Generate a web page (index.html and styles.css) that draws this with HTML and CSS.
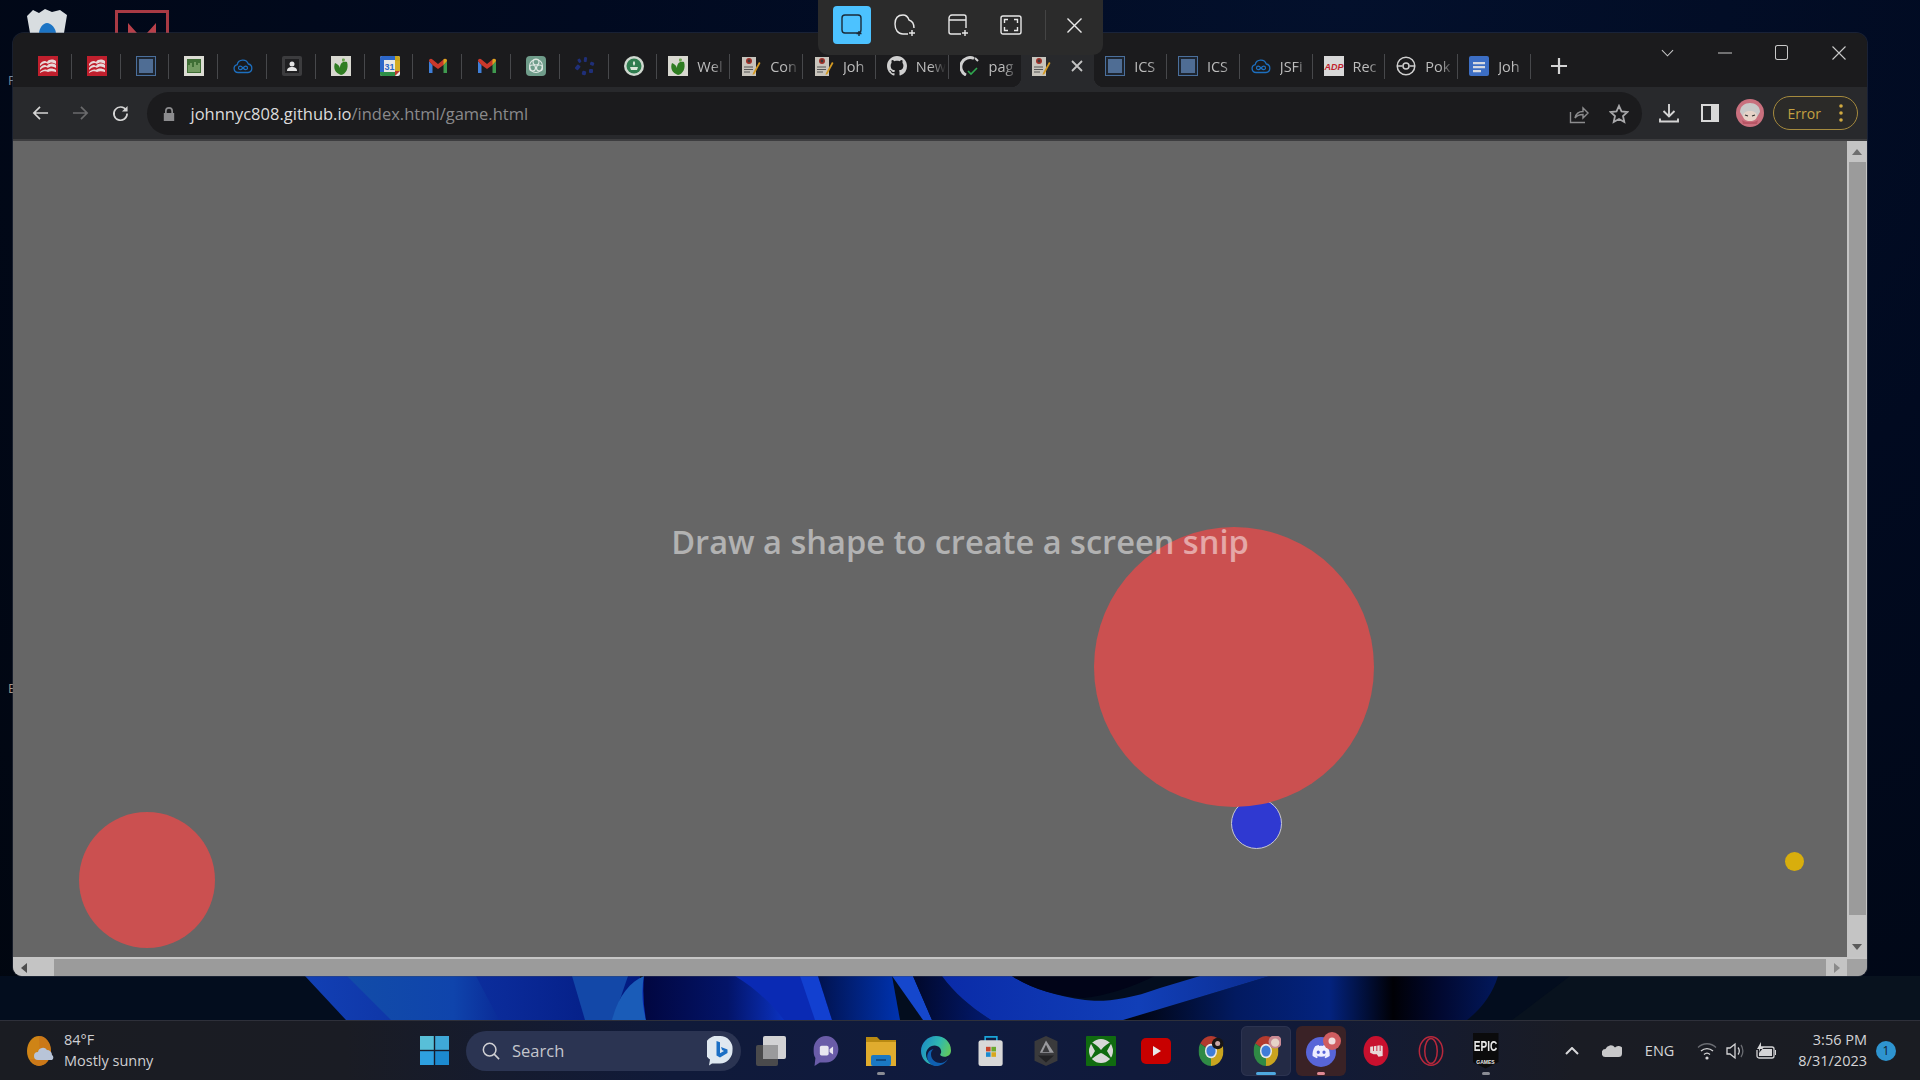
FILE: index.html
```html
<!DOCTYPE html>
<html lang="en">
<head>
<meta charset="utf-8">
<title>Snip</title>
<link rel="stylesheet" href="styles.css">
</head>
<body>
<svg class="defs" width="0" height="0" aria-hidden="true">
  <defs>
    <symbol id="f-hmh" viewBox="0 0 20 20"><rect width="20" height="20" fill="#c01f2d"/><path d="M2 8c2-3 5-4 7-2 2-3 6-3 9-1v3c-3-2-6-2-8 0-2-2-5-1-8 2zM2 12c2-3 5-4 7-2 2-3 6-3 9-1v3c-3-2-6-2-8 0-2-2-5-1-8 2zM2 16c2-2 5-3 7-2 2-2 6-2 9 0v2c-3-1-6-1-8 0-2-1-5-1-8 1z" fill="#e8d8d8"/></symbol>
    <symbol id="f-ics" viewBox="0 0 20 20"><rect x=".5" y=".5" width="19" height="19" fill="#1d2530" stroke="#4a6f9c"/><rect x="3" y="3" width="14" height="14" fill="#4f6d94"/></symbol>
    <symbol id="f-chart" viewBox="0 0 20 20"><rect width="20" height="20" fill="#dcdcd4"/><rect x="3" y="3" width="14" height="14" fill="#3f6e35"/><path d="M5 16V9M7 16V7M9 16v-5M11 16V6M13 16V9M15 16V7" stroke="#a8c890" stroke-width="1"/></symbol>
    <symbol id="f-cloud" viewBox="0 0 20 20"><path d="M5 16.5a4 4 0 0 1-.8-7.9A5.8 5.8 0 0 1 15.3 8a4.3 4.3 0 0 1-.3 8.5z" fill="none" stroke="#1d6fbf" stroke-width="1.3"/><path d="M10 12c-1-1.4-1.8-1.9-2.7-1.9a1.8 1.8 0 0 0 0 3.6c.9 0 1.7-.5 2.7-1.7s1.8-1.9 2.7-1.9a1.8 1.8 0 0 1 0 3.6c-.9 0-1.7-.5-2.7-1.7z" fill="none" stroke="#1d6fbf" stroke-width="1.2"/></symbol>
    <symbol id="f-contact" viewBox="0 0 20 20"><rect width="20" height="20" rx="2" fill="#3c3c3e"/><rect x="3" y="3" width="14" height="14" fill="#1f1f21"/><circle cx="10" cy="8" r="2.5" fill="#e4e4e4"/><path d="M5 15c0-3 2-4 5-4s5 1 5 4z" fill="#e4e4e4"/></symbol>
    <symbol id="f-leaf" viewBox="0 0 20 20"><rect width="20" height="20" fill="#d8d8d0"/><path d="M10 19C4 17 2 12 4 7c2 1 4 2 5 5 0-4 2-7 7-6 2 6-1 12-6 13z" fill="#2f7d22"/><path d="M11 3c2-1 3 0 3 1-1 2-2 2-3 1z" fill="#6aa84f"/></symbol>
    <symbol id="f-cal" viewBox="0 0 20 20"><rect width="20" height="20" rx="2" fill="#e8e8e8"/><path d="M0 4V2a2 2 0 0 1 2-2h13v4z" fill="#2d67c9"/><path d="M0 4h4v12H0z" fill="#2d67c9"/><path d="M0 16h15v4H2a2 2 0 0 1-2-2z" fill="#2e8f47"/><path d="M15 0h3a2 2 0 0 1 2 2v3h-5z" fill="#c9a51e"/><path d="M15 5h5v10h-5z" fill="#d4ac22"/><path d="M15 15h5l-5 5z" fill="#b8392d"/><text x="9.6" y="14" class="cal-num">31</text></symbol>
    <symbol id="f-gmail" viewBox="0 0 20 20"><path d="M1 5v12h3.5V9z" fill="#3f7fd8"/><path d="M19 5v12h-3.500V9z" fill="#3f9a4f"/><path d="M1 5c0-2 2-2.800 3.500-1.600L10 8l5.500-4.600C17 2.200 19 3 19 5l-3.500 4L10 13 4.500 9z" fill="#c9392c"/><path d="M15.500 3.400C17 2.200 19 3 19 5l-3.500 4z" fill="#d8a91f"/></symbol>
    <symbol id="f-gpt" viewBox="0 0 20 20"><rect width="20" height="20" rx="4" fill="#6f9c8a"/><g fill="none" stroke="#dfe8e3" stroke-width="1.1"><circle cx="10" cy="6" r="3"/><circle cx="6.500" cy="12" r="3"/><circle cx="13.500" cy="12" r="3"/><circle cx="10" cy="10" r="6.500"/></g></symbol>
    <symbol id="f-spin" viewBox="0 0 20 20"><g fill="#1f2f78"><rect x="9" y="1" width="3" height="5" rx="1" transform="rotate(8 10 3)"/><rect x="15" y="6" width="4" height="3.500" rx="1" transform="rotate(20 17 8)"/><rect x="14" y="13" width="4" height="4" rx="1"/><rect x="7" y="15" width="4" height="4" rx="1" transform="rotate(15 9 17)"/><rect x="1" y="9" width="4" height="5" rx="1" transform="rotate(40 3 11)"/><rect x="3" y="3" width="3" height="4" rx="1" transform="rotate(-30 4 5)"/></g></symbol>
    <symbol id="f-seal" viewBox="0 0 20 20"><circle cx="10" cy="10" r="10" fill="#cfd8cf"/><circle cx="10" cy="10" r="7.500" fill="#2f7d4f"/><path d="M6 11h8l-1 3H7zM10 5c1.500 1 1.500 3 0 5-1.500-2-1.500-4 0-5z" fill="#d9e6d9"/></symbol>
    <symbol id="f-doc" viewBox="0 0 20 20"><rect x="1" y="1" width="14" height="19" fill="#c8c4bc"/><circle cx="8" cy="5" r="3" fill="#a03028"/><circle cx="8" cy="5" r="1.400" fill="#3a3a3a"/><path d="M3 11h9M3 13.500h9M3 16h6" stroke="#555" stroke-width="1"/><path d="M12 17l6-11 1.500 1-6 11-2 1z" fill="#d49a22"/></symbol>
    <symbol id="f-gh" viewBox="0 0 16 16"><path fill="#cfcfcf" d="M8 0C3.580 0 0 3.580 0 8c0 3.540 2.290 6.530 5.470 7.590.4.070.55-.17.55-.38 0-.19-.01-.82-.01-1.490-2.010.37-2.530-.49-2.690-.94-.09-.23-.48-.94-.82-1.130-.28-.15-.68-.52-.01-.53.63-.01 1.080.58 1.230.82.72 1.210 1.870.87 2.330.66.07-.52.28-.87.51-1.070-1.780-.2-3.640-.89-3.640-3.950 0-.87.31-1.590.82-2.150-.08-.2-.36-1.020.08-2.120 0 0 .67-.21 2.200.82.64-.18 1.320-.27 2-.27.68 0 1.360.09 2 .27 1.530-1.040 2.200-.82 2.200-.82.44 1.100.16 1.920.08 2.120.51.56.82 1.270.82 2.150 0 3.070-1.870 3.750-3.650 3.950.29.25.54.73.54 1.480 0 1.070-.01 1.930-.01 2.200 0 .21.15.46.55.38A8.013 8.013 0 0 0 16 8c0-4.420-3.580-8-8-8z"/></symbol>
    <symbol id="f-pag" viewBox="0 0 20 20"><path d="M14 2.500A9 9 0 0 0 6 19" fill="none" stroke="#cfcfcf" stroke-width="3"/><path d="M15 2l3 3" stroke="#cfcfcf" stroke-width="2"/><path d="M8 15l3 3 6-6" fill="none" stroke="#2fa84f" stroke-width="1.600"/></symbol>
    <symbol id="f-adp" viewBox="0 0 20 20"><rect width="20" height="20" fill="#d8d8d8"/><text x="10" y="13.500" class="adp-word">ADP</text></symbol>
    <symbol id="f-poke" viewBox="0 0 20 20"><circle cx="10" cy="10" r="8.800" fill="none" stroke="#cfcfcf" stroke-width="1.500"/><path d="M1.500 10h5M13.500 10h5" stroke="#cfcfcf" stroke-width="1.500"/><circle cx="10" cy="10" r="3" fill="none" stroke="#cfcfcf" stroke-width="1.500"/></symbol>
    <symbol id="f-gdoc" viewBox="0 0 20 20"><rect width="20" height="20" rx="2" fill="#3c6ec4"/><path d="M4 6h12v2.200H4zM4 10h12v2.200H4zM4 14h8v2.200H4z" fill="#d5d9e0"/></symbol>
    <symbol id="t-chrome" viewBox="0 0 24 24"><path d="M12 12L1.610 6A12 12 0 0 1 22.390 6Z" fill="#b33a2e"/><path d="M12 12L22.390 6A12 12 0 0 1 12 24Z" fill="#c9a41f"/><path d="M12 12L12 24A12 12 0 0 1 1.610 6Z" fill="#2f8a45"/><circle cx="12" cy="12" r="5.800" fill="#e8e8e8"/><circle cx="12" cy="12" r="4.400" fill="#3f7cd8"/></symbol>
  </defs>
</svg>

<main class="desktop">
  <svg class="wallpaper" viewBox="0 0 1920 44" preserveAspectRatio="none" aria-hidden="true">
    <defs>
      <linearGradient id="w1" x1="0" x2="1"><stop offset="0" stop-color="#1240b4"/><stop offset=".6" stop-color="#0a2a98"/><stop offset="1" stop-color="#021a80"/></linearGradient>
      <linearGradient id="w2" x1="0" x2="1"><stop offset="0" stop-color="#124ca8"/><stop offset=".7" stop-color="#0f44ac"/><stop offset="1" stop-color="#0a2c98"/></linearGradient>
      <linearGradient id="w3" x1="0" x2="1"><stop offset="0" stop-color="#010640"/><stop offset=".6" stop-color="#031468"/><stop offset="1" stop-color="#0b32c0"/></linearGradient>
      <linearGradient id="w4" x1="0" x2="1"><stop offset="0" stop-color="#01124e"/><stop offset="1" stop-color="#0033b0"/></linearGradient>
      <linearGradient id="w5" x1="0" x2="1"><stop offset="0" stop-color="#01082a"/><stop offset="1" stop-color="#021a70"/></linearGradient>
      <linearGradient id="w6" x1="0" x2="1"><stop offset="0" stop-color="#0a2ba8"/><stop offset=".6" stop-color="#113fb8"/><stop offset="1" stop-color="#0b2d90"/></linearGradient>
      <linearGradient id="w7" x1="0" x2="1"><stop offset="0" stop-color="#010208"/><stop offset=".3" stop-color="#021a60"/><stop offset=".55" stop-color="#03237f"/><stop offset=".72" stop-color="#000005"/><stop offset=".84" stop-color="#01082e"/><stop offset="1" stop-color="#02185c"/></linearGradient>
    </defs>
    <rect width="1920" height="44" fill="#030d1e"/>
    <path d="M1512 44L1570 0H1920V44Z" fill="#08121e"/>
    <path d="M1123 44L1270 0H1498Q1490 26 1467 44Z" fill="url(#w7)"/>
    <path d="M305 0H640V44H346Z" fill="url(#w1)"/>
    <path d="M347 0H476L499 44H391Z" fill="url(#w2)"/>
    <path d="M572 0H628L613 44H585Z" fill="#1348a8"/>
    <path d="M612 44C618 20 630 6 644 0H660V44Z" fill="#1a5cb8"/>
    <path d="M630 0H835V44H646Q640 20 644 0Z" fill="#0a2ab4"/>
    <path d="M644 0H735C755 12 772 28 784 44H646Q642 22 644 0Z" fill="url(#w3)"/>
    <path d="M800 0H818L832 44H815Z" fill="#1240d0"/>
    <path d="M818 0H892L900 44H832Z" fill="url(#w4)"/>
    <path d="M892 0H913L932 44H923Z" fill="#1547cc"/>
    <path d="M913 0H942C955 18 972 32 991 44H932Z" fill="url(#w5)"/>
    <path d="M942 0H1012C1030 12 1055 20 1085 24C1100 26 1125 25 1160 12L1200 0H1270L1123 44H991C972 32 955 18 942 0Z" fill="url(#w6)"/>
    <path d="M1012 0H1155C1130 12 1105 20 1083 22C1055 20 1030 12 1012 0Z" fill="#010418"/>
  </svg>

  <div class="bin-icon" aria-hidden="true">
    <svg viewBox="0 0 44 26" width="44" height="26"><path d="M2 8l6-6 6 3 6-4 7 3 8-2 7 5-3 18H5z" fill="#d8dde0"/><path d="M14 26c0-6 4-11 8-11s9 5 9 11z" fill="#1c74c4"/></svg>
  </div>
  <div class="game-icon" aria-hidden="true">
    <svg viewBox="0 0 54 23" width="54" height="23"><path d="M13 23V13l9 10zM41 23V13l-9 10z" fill="#b8404a"/></svg>
  </div>
  <span class="edge-label edge-label-top">F</span>
  <span class="edge-label edge-label-mid">E</span>

  <section class="window">
    <div class="tabstrip">
      <div class="tab"><svg class="fav"><use href="#f-hmh"/></svg></div>
      <div class="tab"><svg class="fav"><use href="#f-hmh"/></svg></div>
      <div class="tab"><svg class="fav"><use href="#f-ics"/></svg></div>
      <div class="tab"><svg class="fav"><use href="#f-chart"/></svg></div>
      <div class="tab"><svg class="fav"><use href="#f-cloud"/></svg></div>
      <div class="tab"><svg class="fav"><use href="#f-contact"/></svg></div>
      <div class="tab"><svg class="fav"><use href="#f-leaf"/></svg></div>
      <div class="tab"><svg class="fav"><use href="#f-cal"/></svg></div>
      <div class="tab"><svg class="fav"><use href="#f-gmail"/></svg></div>
      <div class="tab"><svg class="fav"><use href="#f-gmail"/></svg></div>
      <div class="tab"><svg class="fav"><use href="#f-gpt"/></svg></div>
      <div class="tab"><svg class="fav"><use href="#f-spin"/></svg></div>
      <div class="tab"><svg class="fav"><use href="#f-seal"/></svg></div>
      <div class="tab tab-text"><svg class="fav"><use href="#f-leaf"/></svg><span class="tab-title">Wel</span></div>
      <div class="tab tab-text"><svg class="fav"><use href="#f-doc"/></svg><span class="tab-title">Con</span></div>
      <div class="tab tab-text"><svg class="fav"><use href="#f-doc"/></svg><span class="tab-title">Joh</span></div>
      <div class="tab tab-text"><svg class="fav"><use href="#f-gh"/></svg><span class="tab-title">New</span></div>
      <div class="tab tab-text tab-nosep"><svg class="fav"><use href="#f-pag"/></svg><span class="tab-title">pag</span></div>
      <div class="tab-active">
        <svg class="fav"><use href="#f-doc"/></svg>
        <svg class="tab-close" viewBox="0 0 12 12"><path d="M1 1l10 10M11 1L1 11"/></svg>
      </div>
      <div class="tab tab-text"><svg class="fav"><use href="#f-ics"/></svg><span class="tab-title">ICS</span></div>
      <div class="tab tab-text"><svg class="fav"><use href="#f-ics"/></svg><span class="tab-title">ICS</span></div>
      <div class="tab tab-text"><svg class="fav"><use href="#f-cloud"/></svg><span class="tab-title">JSFi</span></div>
      <div class="tab tab-text"><svg class="fav"><use href="#f-adp"/></svg><span class="tab-title">Rec</span></div>
      <div class="tab tab-text"><svg class="fav"><use href="#f-poke"/></svg><span class="tab-title">Pok</span></div>
      <div class="tab tab-text"><svg class="fav"><use href="#f-gdoc"/></svg><span class="tab-title">Joh</span></div>
      <svg class="new-tab" viewBox="0 0 16 16"><path d="M8 0v16M0 8h16"/></svg>
      <div class="caption">
        <svg class="cap-chev" viewBox="0 0 14 8"><path d="M1 1l6 6 6-6"/></svg>
        <svg class="cap-min" viewBox="0 0 14 2"><path d="M0 1h14"/></svg>
        <svg class="cap-max" viewBox="0 0 14 16"><rect x=".5" y=".5" width="13" height="15" rx="2"/></svg>
        <svg class="cap-close" viewBox="0 0 14 14"><path d="M.5.5l13 13M13.500.5l-13 13"/></svg>
      </div>
    </div>

    <div class="toolbar">
      <svg class="nav-icon" viewBox="0 0 18 16"><path d="M17 8H2M8.500 1.500L2 8l6.500 6.500"/></svg>
      <svg class="nav-icon nav-off" viewBox="0 0 18 16"><path d="M1 8h15M9.500 1.500L16 8l-6.500 6.500"/></svg>
      <svg class="nav-icon nav-reload" viewBox="0 0 18 18"><path d="M15 5.500A7 7 0 1 0 16 9"/><path class="solid" d="M16.500 1v6h-6z"/></svg>
      <div class="omnibox">
        <svg class="lock" viewBox="0 0 12 14"><path d="M2 6V4a4 4 0 0 1 8 0v2h1.200v8H.8V6zm1.700 0h4.600V4a2.300 2.300 0 0 0-4.600 0z"/></svg>
        <span class="url"><span class="url-host">johnnyc808.github.io</span>/index.html/game.html</span>
        <svg class="omni-share" viewBox="0 0 20 20"><path d="M1.500 8v10.500h14.500M6 14c1-4.500 4-6.500 8-6.500V4l5 5-5 5v-3.500c-3 0-6 1-8 3.500z"/></svg>
        <svg class="omni-star" viewBox="0 0 20 20"><path d="M10 1.800l2.500 5.500 6 .7-4.500 4 1.300 6L10 15l-5.300 3 1.300-6-4.500-4 6-.7z"/></svg>
      </div>
      <svg class="tool-download" viewBox="0 0 20 20"><path d="M10 1v12M4.500 8l5.500 5.500L15.500 8"/><path d="M1 15.500v3h18v-3"/></svg>
      <svg class="tool-panel" viewBox="0 0 18 18"><rect width="18" height="18" fill="#d8d8d8"/><rect x="2" y="2" width="8" height="14" fill="#28292c"/></svg>
      <svg class="avatar" viewBox="0 0 28 28">
        <circle cx="14" cy="14" r="14" fill="#c9707e"/>
        <path d="M4 13c0-6 5-9 10-9s10 3 10 9l-3 5H7z" fill="#c9c9c9"/>
        <path d="M7 17c0-3 3-5 7-5s7 2 7 5-3 5-7 5-7-2-7-5z" fill="#e6d3c8"/>
        <path d="M9 16l3 1M19 16l-3 1" stroke="#333" stroke-width="1.200"/>
        <path d="M6 21c3 3 13 3 16 0l-1 4H7z" fill="#b85565"/>
      </svg>
      <div class="error-pill"><span class="error-text">Error</span><svg class="error-dots" viewBox="0 0 4 18"><circle cx="2" cy="2" r="1.800"/><circle cx="2" cy="9" r="1.800"/><circle cx="2" cy="16" r="1.800"/></svg></div>
    </div>

    <div class="viewport">
      <div class="page-row">
        <div class="canvas">
          <div class="ball ball-big"></div>
          <div class="ball ball-blue"></div>
          <div class="ball ball-small"></div>
          <div class="ball ball-gold"></div>
        </div>
        <div class="vscroll">
          <div class="sb-btn"><span class="tri-up"></span></div>
          <div class="vthumb"></div>
          <div class="sb-btn sb-btn-end"><span class="tri-down"></span></div>
        </div>
      </div>
      <div class="hscroll">
        <div class="hbtn hbtn-left"><span class="tri-left"></span></div>
        <div class="hthumb"></div>
        <div class="hbtn hbtn-right"><span class="tri-right"></span></div>
        <div class="hcorner"></div>
      </div>
    </div>
  </section>

  <div class="snip-bar">
    <div class="snip-btn snip-on"><svg viewBox="0 0 22 22"><rect x="1" y="1" width="19" height="18" rx="3"/><path d="M18 17v5M15.500 19.500h5"/></svg></div>
    <div class="snip-btn"><svg viewBox="0 0 22 22"><path d="M14 20H9C4 20 1 16 1 10S4 1 9 1c3 0 5 2 6 5 3 1 5 4 5 8"/><path d="M18 16v6M15 19h6"/></svg></div>
    <div class="snip-btn"><svg viewBox="0 0 22 22"><path d="M14 20H4a2 2 0 0 1-2-2V4a3 3 0 0 1 3-3h12a2 2 0 0 1 2 2v11M2 6h17"/><path d="M18 16v6M15 19h6"/></svg></div>
    <div class="snip-btn"><svg viewBox="0 0 22 22"><rect x="1" y="2" width="20" height="18" rx="2"/><path d="M4.500 9V5.500H8M14 5.500h3.500V9M17.500 13v3.500H14M8 16.500H4.500V13"/></svg></div>
    <div class="snip-sep"></div>
    <div class="snip-btn snip-x"><svg viewBox="0 0 16 16"><path d="M.5.5l15 15M15.500.5l-15 15"/></svg></div>
  </div>

  <p class="prompt">Draw a shape to create a screen snip</p>

  <footer class="taskbar">
    <div class="weather">
      <svg class="weather-icon" viewBox="0 0 28 30"><ellipse cx="13" cy="15" rx="12" ry="15" fill="#cf8416"/><path d="M13 0a12 15 0 0 1 0 30c-3 0-7-3-9-7h10z" fill="#c8701a" opacity=".6"/><path d="M12 24a4 4 0 0 1 0-8 5 5 0 0 1 9-2 5 5 0 0 1 5 5 3 3 0 0 1 0 5z" fill="#b8c4d8"/></svg>
      <div class="weather-text"><span class="temp">84°F</span><span class="cond">Mostly sunny</span></div>
    </div>
    <div class="task-item">
      <svg class="ti-start" viewBox="0 0 29 29"><rect width="13.800" height="13.800" fill="#58bfd8"/><rect x="15.200" width="13.800" height="13.800" fill="#3fa8d8"/><rect y="15.200" width="13.800" height="13.800" fill="#2ea0e0"/><rect x="15.200" y="15.200" width="13.800" height="13.800" fill="#1c8ad0"/></svg>
    </div>
    <div class="search">
      <svg class="search-icon" viewBox="0 0 20 20"><circle cx="8.500" cy="8.500" r="7"/><path d="M13.500 13.500L19 19"/></svg>
      <span class="search-text">Search</span>
      <svg class="bing" viewBox="0 0 26 30"><path d="M13 0a12.500 12.500 0 0 1 12.500 14A12.500 13 0 0 1 13 27.500H5l-3 2 1-6A13 13 0 0 1 13 0z" fill="#dfe8f0"/><path d="M9.500 5l3.500 1.200v11l4-2.200-2-1-1-3 6.500 2.500v3.500l-7.500 4.500-3.500-2z" fill="#1c6fc4"/></svg>
    </div>
    <div class="task-item"><svg class="ti" viewBox="0 0 30 30"><rect y="9" width="22" height="21" rx="2" fill="#4a4a4c"/><rect x="7" width="23" height="23" rx="2" fill="#d2d2d4"/><rect x="7" y="9" width="15" height="14" fill="#9a9a9c"/></svg></div>
    <div class="task-item"><svg class="ti" viewBox="0 0 30 34"><path d="M15 0c8 0 14 7 14 15s-6 15-14 15H8l-6 4 1-9C1 22 1 19 1 15 1 7 7 0 15 0z" fill="#6a5ca8"/><rect x="8" y="11" width="10" height="11" rx="2" fill="#e8e6f0"/><path d="M19 15l4-3v9l-4-3z" fill="#e8e6f0"/></svg></div>
    <div class="task-item task-running">
      <svg class="ti" viewBox="0 0 30 30"><path d="M0 1h11l3 3h16v26H0z" fill="#b98a12"/><path d="M0 6h30v24H0z" fill="#e0ac2e"/><rect x="5" y="19" width="20" height="11" rx="2" fill="#1a78c2"/><path d="M10 24h10" stroke="#0d3e70" stroke-width="1.500"/></svg>
      <span class="indicator ind-gray"></span>
    </div>
    <div class="task-item"><svg class="ti" viewBox="0 0 24 24"><defs><linearGradient id="edge1" x1="0" y1="0" x2="1" y2=".4"><stop offset="0" stop-color="#1a86c8"/><stop offset=".6" stop-color="#2fb8b0"/><stop offset="1" stop-color="#5fc860"/></linearGradient></defs><path d="M12 0C18.600 0 24 4.800 24 11.500c0 3.200-2.400 5-5.200 5-2 0-3.400-.8-3.400-1.800 0-.5.5-.8.7-1.600.5-2.600-1.700-5.600-5.200-5.600-4 0-6.900 3.300-6.900 7 0 4 3 8.300 8 8.500C5.500 24 0 18.600 0 12 0 5.400 5.400 0 12 0z" fill="url(#edge1)"/><path d="M22 17.500c-2 4-5.800 6.500-10 6.500-3 0-7-3-7-7.500 0-3 2-6 5-6-1.500 1-2 2.500-2 4 0 4.500 4 7 7.500 7 2.500 0 4.800-1.300 6.500-4z" fill="#0f5fb0"/></svg></div>
    <div class="task-item"><svg class="ti" viewBox="0 0 30 36"><path d="M8 6V1h14v5" fill="none" stroke="#1aa4d8" stroke-width="2"/><rect y="5" width="29" height="31" rx="3" fill="#d8d8d8"/><rect x="9" y="13" width="5.500" height="5.500" fill="#c8452c"/><rect x="15.500" y="13" width="5.500" height="5.500" fill="#6aa82c"/><rect x="9" y="19.500" width="5.500" height="5.500" fill="#1a8ad0"/><rect x="15.500" y="19.500" width="5.500" height="5.500" fill="#d8a81e"/></svg></div>
    <div class="task-item"><svg class="ti" viewBox="0 0 30 34"><path d="M15 0l13 6v22l-13 6-13-6V6z" fill="#3a3a3c"/><path d="M15 5l9 14H8z" fill="#9a9a9e"/><path d="M15 10l4 8h-8z" fill="#3a3a3c"/><path d="M6 22h18l-9 8z" fill="#222224"/></svg></div>
    <div class="task-item"><svg class="ti" viewBox="0 0 30 30"><rect width="30" height="30" rx="1" fill="#106b10"/><circle cx="15" cy="15" r="12" fill="#d8d8d8"/><path d="M4 6c4 1 8 4 11 8 3-4 7-7 11-8l-5 9 6 10c-4-3-9-7-12-8-3 1-8 5-12 8l6-10z" fill="#106b10"/></svg></div>
    <div class="task-item"><svg class="ti" viewBox="0 0 30 26"><rect width="30" height="26" rx="5" fill="#c80000"/><path d="M12 8l8 5-8 5z" fill="#e8e8e8"/></svg></div>
    <div class="task-item">
      <svg class="ti" viewBox="0 0 30 36"><g transform="scale(1.250 1.500)"><use href="#t-chrome" width="24" height="24"/></g><circle cx="23" cy="9" r="7" fill="#1a1614"/><circle cx="23" cy="9" r="3" fill="#c8a8a8"/></svg>
    </div>
    <div class="task-item task-active">
      <svg class="ti" viewBox="0 0 30 36"><g transform="scale(1.250 1.500)"><use href="#t-chrome" width="24" height="24"/></g><circle cx="26" cy="7" r="8" fill="#c98a94"/><circle cx="26" cy="8" r="5" fill="#e6d3c8"/></svg>
      <span class="indicator ind-blue"></span>
    </div>
    <div class="task-item task-alert">
      <svg class="ti ti-discord" viewBox="-3 -1 36 36"><circle cx="15" cy="18" r="15" fill="#5865d8"/><g transform="translate(6.500 9) scale(.72)"><path fill="#eef" d="M20.317 4.370a19.791 19.791 0 0 0-4.885-1.515.074.074 0 0 0-.079.037c-.211.375-.445.865-.608 1.250-1.845-.276-3.680-.276-5.487 0-.164-.393-.406-.874-.618-1.250a.077.077 0 0 0-.079-.037 19.736 19.736 0 0 0-4.885 1.515.070.070 0 0 0-.032.028C.533 9.046-.319 13.580.099 18.058a.082.082 0 0 0 .031.056c2.053 1.508 4.041 2.423 5.993 3.029a.078.078 0 0 0 .084-.027c.462-.630.873-1.295 1.226-1.994a.076.076 0 0 0-.042-.106c-.653-.248-1.274-.550-1.872-.892a.077.077 0 0 1-.008-.128c.126-.094.252-.192.372-.291a.074.074 0 0 1 .078-.011c3.928 1.794 8.180 1.794 12.061 0a.074.074 0 0 1 .079.010c.120.099.246.198.373.292a.077.077 0 0 1-.007.128 12.299 12.299 0 0 1-1.873.891.077.077 0 0 0-.041.107c.360.698.772 1.363 1.225 1.993a.076.076 0 0 0 .084.029c1.961-.607 3.950-1.522 6.002-3.029a.077.077 0 0 0 .031-.055c.501-5.177-.838-9.674-3.548-13.661a.061.061 0 0 0-.031-.028zM8.020 15.331c-1.183 0-2.157-1.086-2.157-2.419 0-1.333.956-2.419 2.157-2.419 1.211 0 2.176 1.095 2.157 2.419 0 1.333-.956 2.419-2.157 2.419zm7.975 0c-1.183 0-2.157-1.086-2.157-2.419 0-1.333.955-2.419 2.157-2.419 1.211 0 2.176 1.095 2.157 2.419 0 1.333-.946 2.419-2.157 2.419z"/></g><circle cx="26" cy="7" r="9" fill="#cf5d60"/><circle cx="26" cy="7" r="3.500" fill="#f0e0e0"/></svg>
      <span class="indicator ind-pink"></span>
    </div>
    <div class="task-item"><svg class="ti" viewBox="0 0 30 36"><ellipse cx="15" cy="18" rx="15" ry="18" fill="#c8102e"/><path d="M8 13l12-2 3 1v12l-5 1-2-3-4 0-4-2z" fill="#e8d8d8"/><path d="M12 12v6M16 11v7M20 11v7" stroke="#c8102e" stroke-width="1"/></svg></div>
    <div class="task-item"><svg class="ti" viewBox="0 0 30 36"><g fill="none" stroke="#b8283c" stroke-width="1.800"><ellipse cx="15" cy="18" rx="14" ry="17"/><ellipse cx="15" cy="18" rx="7.500" ry="15"/></g></svg></div>
    <div class="task-item task-running">
      <div class="epic"><span class="epic-big">EPIC</span><span class="epic-small">GAMES</span></div>
      <span class="indicator ind-gray"></span>
    </div>

    <div class="tray">
      <svg class="tray-chev" viewBox="0 0 14 8"><path d="M1 7l6-6 6 6"/></svg>
      <div class="tray-slot tray-cloud"><svg viewBox="0 0 20 13" width="20" height="13"><path d="M4 13a4 4 0 0 1-.5-8A5.500 5.500 0 0 1 13 3.500 4.500 4.500 0 0 1 20 9.500 3.500 3.500 0 0 1 16.500 13z" fill="#c8c8ca"/></svg></div>
      <span class="tray-lang">ENG</span>
      <svg class="tray-wifi" viewBox="0 0 20 18"><path class="dim" d="M1 5.500c5-5 13-5 18 0"/><path d="M4 9c3.500-3.300 8.500-3.300 12 0M7 12.500c1.800-1.600 4.200-1.600 6 0"/><circle class="solid" cx="10" cy="16" r="1.600"/></svg>
      <svg class="tray-vol" viewBox="0 0 20 18"><path d="M1 6v6h3l5 4V2L4 6z"/><path d="M12 5.500c1.500 2 1.500 5 0 7"/><path class="dim" d="M15 3c2.500 3.500 2.500 8.500 0 12"/></svg>
      <svg class="tray-batt" viewBox="0 0 20 18"><path d="M4.500 5H16a2 2 0 0 1 2 2v7a2 2 0 0 1-2 2H3a2 2 0 0 1-2-2V8"/><path class="solid" d="M3 7h13v7H3zM19 8h1v5h-1zM5 0L1 7h3l-1 4 5-6H5z"/></svg>
      <div class="clock"><span>3:56 PM</span><span>8/31/2023</span></div>
      <span class="badge">1</span>
    </div>
  </footer>
</main>
</body>
</html>
```
FILE: styles.css
```css
* { box-sizing: border-box; }
html, body { margin: 0; padding: 0; height: 100%; overflow: hidden; background: #020a1c; }
body { font-family: "Open Sans", "Noto Sans", sans-serif; }
.defs { display: block; height: 0; }
.cal-num { font: 700 9px "Liberation Sans", sans-serif; fill: #2d67c9; text-anchor: middle; }
.adp-word { font: italic 700 9px "Liberation Sans", sans-serif; fill: #c01f2d; text-anchor: middle; }

.desktop {
  position: relative;
  width: 1920px;
  height: 1080px;
  overflow: hidden;
  background: radial-gradient(ellipse at 70% 0, #03102c 0, #010a20 40%, #01060f 100%);
  display: flex;
  flex-direction: column;
  justify-content: flex-end;
}
.wallpaper { position: absolute; left: 0; top: 976px; width: 1920px; height: 44px; }
.bin-icon { position: absolute; left: 25px; top: 8px; }
.game-icon { position: absolute; left: 115px; top: 10px; width: 54px; height: 23px; border: 3px solid #a83a44; border-bottom: 0; }
.game-icon svg { display: block; margin: -3px; }
.edge-label { position: absolute; left: 8px; font-size: 13px; color: #7a8a9a; line-height: 1; }
.edge-label-top { top: 74px; }
.edge-label-mid { top: 682px; color: #a89888; }

/* browser window */
.window {
  position: absolute;
  left: 12.500px;
  top: 33px;
  width: 1854.500px;
  height: 943px;
  border-radius: 11px 11px 9px 9px;
  overflow: hidden;
  display: flex;
  flex-direction: column;
  background: #1b1b1d;
  box-shadow: 0 0 0 1px rgba(70, 75, 90, .35);
}
.tabstrip {
  flex: 0 0 54px;
  height: 54px;
  padding: 20.500px 0 8.500px 10.500px;
  display: flex;
  align-items: center;
  position: relative;
  background: #1b1b1d;
}
.tab {
  flex: 0 0 48.800px;
  height: 25px;
  display: flex;
  align-items: center;
  padding-left: 15px;
  border-right: 1px solid #47484b;
}
.tab-text { flex-basis: 72.800px; padding-left: 11px; }
.tab-nosep { border-right: 0; }
.fav { width: 20px; height: 20px; flex: none; display: block; }
.tab-title {
  margin-left: 9px;
  font-size: 14.500px;
  color: #bdbdbd;
  white-space: nowrap;
  width: 30px;
  overflow: hidden;
  -webkit-mask-image: linear-gradient(90deg, #000 50%, transparent 100%);
  mask-image: linear-gradient(90deg, #000 50%, transparent 100%);
}
.tab-active {
  flex: 0 0 72.800px;
  height: 46px;
  margin-top: -13px;
  margin-bottom: -8.500px;
  align-self: flex-end;
  display: flex;
  align-items: center;
  padding: 4px 0 0 10px;
  gap: 20px;
  background: #28292c;
  border-radius: 9px 9px 0 0;
  position: relative;
}
.tab-active::before, .tab-active::after {
  content: "";
  position: absolute;
  bottom: 0;
  width: 10px;
  height: 10px;
}
.tab-active::before { left: -10px; background: radial-gradient(circle at 0 0, transparent 10px, #28292c 10.500px); }
.tab-active::after { right: -10px; background: radial-gradient(circle at 100% 0, transparent 10px, #28292c 10.500px); }
.tab-close { width: 12px; height: 12px; fill: none; stroke: #c4c4c4; stroke-width: 1.800; }
.new-tab { width: 16px; height: 16px; margin-left: 20px; fill: none; stroke: #d4d4d4; stroke-width: 2.200; }
.caption {
  margin-left: auto;
  margin-right: 7px;
  align-self: flex-start;
  margin-top: -11px;
  width: 199px;
  display: flex;
  align-items: center;
  height: 20px;
  padding-left: 0;
}
.caption svg { fill: none; stroke: #c8c8c8; stroke-width: 1.100; flex: none; }
.cap-chev { width: 13px; height: 8px; margin-left: 0; }
.cap-min { width: 14px; height: 2px; margin-left: 44px; }
.cap-max { width: 13px; height: 15px; margin-left: 43px; }
.cap-close { width: 14px; height: 14px; margin-left: 44px; }

/* toolbar */
.toolbar {
  flex: 0 0 52px;
  height: 52px;
  display: flex;
  align-items: center;
  background: #28292c;
  padding: 0 9px 0 19px;
}
.nav-icon { width: 17px; height: 16px; margin-right: 23px; fill: none; stroke: #d4d4d4; stroke-width: 1.800; flex: none; }
.nav-off { stroke: #6a6a6c; }
.nav-reload { margin-right: 18px; height: 17px; }
.nav-reload .solid { fill: #d4d4d4; stroke: none; }
.omnibox {
  flex: 0 0 1495px;
  height: 43px;
  margin-top: 1px;
  border-radius: 22px;
  background: #1b1b1d;
  display: flex;
  align-items: center;
  padding-left: 16px;
}
.lock { width: 12px; height: 14px; fill: #8c8c8e; flex: none; }
.url { margin-left: 16px; font-size: 16.500px; color: #8a8a8c; white-space: nowrap; }
.url-host { color: #dcdcdc; }
.omni-share { width: 20px; height: 20px; margin-left: auto; fill: none; stroke: #8c8c8e; stroke-width: 1.400; flex: none; }
.omni-star { width: 20px; height: 20px; margin: 0 13px 0 20px; fill: none; stroke: #a8a8aa; stroke-width: 1.800; flex: none; }
.tool-download { width: 20px; height: 20px; margin-left: 17px; fill: none; stroke: #d4d4d4; stroke-width: 1.900; flex: none; }
.tool-panel { width: 18px; height: 18px; margin-left: 22px; flex: none; }
.avatar { width: 28px; height: 28px; margin-left: 17px; flex: none; }
.error-pill {
  width: 85px;
  height: 34px;
  margin-left: 9px;
  border: 1.500px solid #a58a3e;
  border-radius: 17px;
  display: flex;
  align-items: center;
  padding-left: 14px;
  flex: none;
  background: #2b2a28;
}
.error-text { font-size: 14px; color: #c4a041; }
.error-dots { width: 4px; height: 18px; margin-left: 18px; fill: #d0aa40; }

/* page viewport */
.viewport { flex: 1; display: flex; flex-direction: column; min-height: 0; border-top: 2px solid #3d3d3f; }
.page-row { flex: 1; display: flex; min-height: 0; }
.canvas { flex: 1; position: relative; background: #666; }
.ball { position: absolute; border-radius: 50%; }
.ball-big { left: 1081.500px; top: 385.500px; width: 280px; height: 280px; background: #cb5050; z-index: 2; }
.ball-blue { left: 1218px; top: 657px; width: 51px; height: 51px; background: #2f39d1; border: 1.500px solid #c8c8d0; }
.ball-small { left: 66px; top: 671px; width: 136px; height: 136px; background: #cb5050; }
.ball-gold { left: 1772px; top: 710.500px; width: 19px; height: 19px; background: #d8ae0c; }
.vscroll { flex: 0 0 20px; display: flex; flex-direction: column; background: #c4c4c4; }
.sb-btn { height: 21px; display: flex; justify-content: center; align-items: center; background: #c4c4c4; }
.sb-btn-end { margin-top: 21px; }
.vthumb { flex: 1; margin: 0 1px 0 2px; background: #9b9b9b; }
.tri-up, .tri-down, .tri-left, .tri-right { display: block; width: 0; height: 0; border-style: solid; border-color: transparent; }
.tri-up { border-width: 0 5px 6px; border-bottom-color: #6e6e6e; }
.tri-down { border-width: 6px 5px 0; border-top-color: #5a5a5a; }
.tri-left { border-width: 5px 6px 5px 0; border-right-color: #4e4e4e; }
.tri-right { border-width: 5px 0 5px 6px; border-left-color: #8a8a8a; }
.hscroll { flex: 0 0 19px; display: flex; border-top: 2px solid #c6c6c6; background: #9b9b9b; }
.hbtn { display: flex; align-items: center; background: #c4c4c4; }
.hbtn-left { flex: 0 0 41.500px; padding-left: 8px; }
.hthumb { flex: 1; background: #9b9b9b; }
.hbtn-right { flex: 0 0 21px; justify-content: center; }
.hcorner { flex: 0 0 20px; background: #a2a2a2; }

/* snipping bar */
.snip-bar {
  position: absolute;
  left: 818px;
  top: 0;
  width: 285px;
  height: 55px;
  background: #2b2b2b;
  border-radius: 0 0 10px 10px;
  display: flex;
  align-items: center;
  padding: 0 0 5px 14.500px;
  z-index: 5;
}
.snip-btn { width: 38px; height: 38px; margin-right: 15px; border-radius: 4px; display: flex; align-items: center; justify-content: center; flex: none; }
.snip-btn svg { width: 22px; height: 22px; fill: none; stroke: #e8e8e8; stroke-width: 1.400; }
.snip-on { background: #4cc2ff; margin-right: 15px; }
.snip-on svg { stroke: #1a2a38; }
.snip-sep { width: 1px; height: 30px; background: #444; margin: 0 10px 0 0; flex: none; }
.snip-x svg { width: 15px; height: 15px; stroke: #e8e8e8; stroke-width: 1.500; }

.prompt {
  position: absolute;
  left: 0;
  width: 1920px;
  top: 519px;
  margin: 0;
  text-align: center;
  font-size: 32.600px;
  line-height: 46px;
  font-weight: 600;
  color: rgba(255, 255, 255, .5);
  z-index: 4;
}

/* taskbar */
.taskbar {
  position: relative;
  flex: 0 0 60px;
  height: 60px;
  display: flex;
  align-items: center;
  padding-left: 26px;
  border-top: 1px solid #2e303a;
  background: linear-gradient(90deg, #1a1c22 0, #1a1c24 18%, #101a3a 35%, #0f1a3e 50%, #111a38 68%, #1a1c24 82%, #1a1c22 100%);
}
.weather { flex: 0 0 381px; display: flex; align-items: center; }
.weather-icon { width: 28px; height: 30px; flex: none; }
.weather-text { margin: -2px 0 0 10px; display: flex; flex-direction: column; font-size: 14.500px; line-height: 21px; color: #cfcfd2; }
.task-item { flex: 0 0 55px; height: 50px; position: relative; display: flex; align-items: center; justify-content: center; border-radius: 6px; }
.ti { width: 30px; height: 30px; display: block; }
.ti-start { width: 29px; height: 29px; }
.ti-discord { width: 36px; height: 36px; overflow: visible; }
.search {
  flex: 0 0 275px;
  height: 40px;
  margin: 0 2px 0 4px;
  border-radius: 20px;
  background: #2b3452;
  display: flex;
  align-items: center;
  padding-left: 16px;
}
.search-icon { width: 18px; height: 18px; fill: none; stroke: #d0d0d4; stroke-width: 1.700; flex: none; }
.search-text { margin-left: 12px; font-size: 16.500px; color: #c4c6cc; }
.bing { width: 26px; height: 30px; margin-left: auto; margin-right: 8px; flex: none; }
.task-active { background: #232a45; box-shadow: inset 0 0 0 1px #2c3350; flex-basis: 50px; margin-left: 2.500px; margin-right: 2.500px; }
.task-alert { background: #3a2226; flex-basis: 50px; margin-left: 2.500px; margin-right: 2.500px; }
.indicator { position: absolute; bottom: 1px; left: 50%; height: 3px; border-radius: 2px; transform: translateX(-50%); width: 8px; }
.ind-gray { background: #8a8c94; }
.ind-blue { background: #4ea8e0; width: 20px; }
.ind-pink { background: #e08a94; }
.epic { width: 26px; height: 36px; background: #0b0b0c; clip-path: polygon(0 0, 100% 0, 100% 82%, 50% 100%, 0 82%); display: flex; flex-direction: column; align-items: center; color: #e8e8e8; font-family: "Liberation Sans", sans-serif; padding-top: 3px; }
.epic-big { font-size: 10px; font-weight: 700; line-height: 14px; transform: scaleY(1.500); transform-origin: top; }
.epic-small { font-size: 5px; font-weight: 700; margin-top: 9px; line-height: 6px; }

.tray { margin-left: auto; display: flex; align-items: center; padding-right: 24px; color: #d4d4d6; }
.tray svg { flex: none; }
.tray-chev { width: 14px; height: 8px; margin: 0 13px; fill: none; stroke: #d8d8da; stroke-width: 2; }
.tray-slot { width: 40px; display: flex; justify-content: center; }
.tray-lang { width: 56px; text-align: center; font-size: 14.500px; }
.tray-wifi { width: 20px; height: 18px; margin: 0 5.400px 0 9px; fill: none; stroke: #d4d4d6; stroke-width: 1.300; }
.tray-vol { width: 20px; height: 18px; margin: 0 4px; fill: none; stroke: #d4d4d6; stroke-width: 1.300; }
.tray-batt { width: 20px; height: 18px; margin: 0 8px 0 6px; fill: none; stroke: #d4d4d6; stroke-width: 1.300; }
.tray .solid { fill: #d4d4d6; stroke: none; }
.tray .dim { stroke: #6a6c72; }
.clock { width: 83px; margin-top: -2px; display: flex; flex-direction: column; align-items: flex-end; font-size: 14.500px; line-height: 21px; }
.badge { width: 20px; height: 20px; margin-left: 9px; border-radius: 50%; background: #2e94d0; color: #10202c; font-size: 12px; line-height: 20px; text-align: center; }
```
